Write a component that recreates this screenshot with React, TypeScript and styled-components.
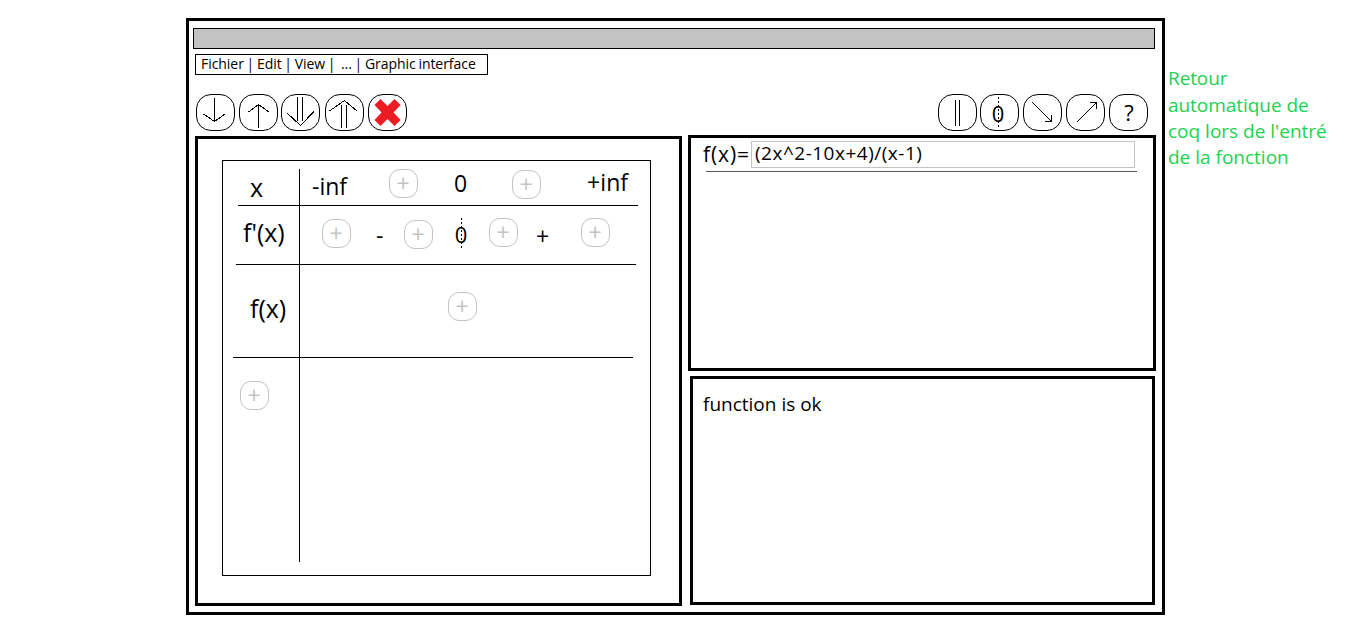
import React from "react";
import styled, { createGlobalStyle } from "styled-components";

const GlobalStyle = createGlobalStyle`
  * { box-sizing: border-box; }
  body {
    margin: 0;
    background: #fff;
    color: #000;
    font-family: "Open Sans", "Noto Sans", sans-serif;
  }
`;

const Page = styled.main`
  display: flex;
  align-items: flex-start;
  width: 1350px;
  height: 619px;
  overflow: hidden;
`;

const Window = styled.section`
  flex: none;
  width: 979px;
  height: 597px;
  margin: 18px 0 0 186px;
  border: 3px solid #000;
`;

const TitleBar = styled.div`
  width: 962px;
  height: 21px;
  margin: 7px 0 0 4px;
  border: 1px solid #000;
  background: #c3c3c3;
`;

const MenuBar = styled.nav`
  display: flex;
  width: 293px;
  height: 21px;
  margin: 5px 0 0 6px;
  padding-left: 5px;
  border: 1px solid #000;
  word-spacing: -0.85px;
`;

const Toolbar = styled.div`
  display: flex;
  justify-content: space-between;
  width: 952px;
  height: 37px;
  margin: 19px 0 0 7px;
`;

const ToolGroup = styled.div`
  display: flex;
`;

const ToolButton = styled.button<{ $gap?: number }>`
  display: flex;
  justify-content: center;
  flex: none;
  width: 39px;
  height: 37px;
  margin: 0 0 0 ${(p) => p.$gap ?? 0}px;
  padding: 0;
  border: 1px solid #000;
  border-radius: 15px;
  background: #fff;
  color: #000;
  font-family: inherit;
`;

const Icon = styled.svg`
  flex: none;
  width: 39px;
  height: 37px;
  margin-top: -1px;
  fill: none;
  stroke: #000;
  stroke-width: 1;
`;

const Columns = styled.div`
  display: flex;
  align-items: flex-start;
  gap: 6px;
  margin: 4px 0 0 6px;
`;

const SideColumn = styled.div`
  display: flex;
  flex-direction: column;
  gap: 5px;
`;

const Panel = styled.div<{ $w: number; $h: number; $top?: number; $left?: number }>`
  width: ${(p) => p.$w}px;
  height: ${(p) => p.$h}px;
  margin: ${(p) => p.$top ?? 0}px 0 0 ${(p) => p.$left ?? 0}px;
  border: 3px solid #000;
  display: flex;
  align-items: flex-start;
`;

const Sheet = styled.div`
  width: 429px;
  height: 416px;
  margin: 21px 0 0 24px;
  padding-top: 8px;
  border: 1px solid #000;
`;

const Row = styled.div<{ $h: number; $indent: number; $last?: boolean }>`
  display: flex;
  align-items: flex-start;
  width: 400px;
  height: ${(p) => p.$h}px;
  margin-left: ${(p) => p.$indent}px;
  border-bottom: ${(p) => (p.$last ? "none" : "1px solid #000")};
`;

const Head = styled.div<{ $w: number }>`
  display: flex;
  align-items: flex-start;
  flex: none;
  width: ${(p) => p.$w}px;
  height: 100%;
  border-right: 1px solid #000;
`;

const Label = styled.span<{
  $size: number;
  $top?: number;
  $left?: number;
  $w?: number;
  $track?: number;
}>`
  flex: none;
  width: ${(p) => (p.$w ? `${p.$w}px` : "auto")};
  height: 30px;
  margin: ${(p) => p.$top ?? 0}px 0 0 ${(p) => p.$left ?? 0}px;
  font-size: ${(p) => p.$size}px;
  line-height: 30px;
  letter-spacing: ${(p) => p.$track ?? 0}px;
  white-space: pre;
`;

const AddButton = styled.button<{ $top: number; $left: number }>`
  display: flex;
  align-items: center;
  justify-content: center;
  flex: none;
  width: 29px;
  height: 29px;
  margin: ${(p) => p.$top}px 0 0 ${(p) => p.$left}px;
  padding: 0 1px 0 0;
  border: 1px solid #c3c3c3;
  border-radius: 11px;
  background: #fff;
  color: #c3c3c3;
  font: 23px/27px "Open Sans", sans-serif;
`;

const Zero = styled(Label)`
  position: relative;
  text-align: center;
`;

const DashedLine = styled.i<{ $x: number; $y: number; $h: number }>`
  position: absolute;
  left: ${(p) => p.$x}px;
  top: ${(p) => p.$y}px;
  width: 1px;
  height: ${(p) => p.$h}px;
  background: repeating-linear-gradient(#000 0 2px, transparent 2px 4px);
`;

const FormulaBar = styled.div`
  display: flex;
  align-items: flex-start;
  width: 431px;
  height: 34px;
  margin-left: 15px;
  border-bottom: 1px solid #555;
`;

const Field = styled.div`
  display: flex;
  width: 384px;
  height: 27px;
  margin-top: 3px;
  border: 1px solid #c3c3c3;
`;

const Note = styled.aside`
  display: flex;
  flex-direction: column;
  margin: 65px 0 0 3px;
  color: #22d152;
`;

const NoteLine = styled.span<{ $track: number; $h?: number }>`
  height: ${(p) => p.$h ?? 26}px;
  font-size: 19px;
  line-height: 26px;
  letter-spacing: ${(p) => p.$track}px;
  white-space: nowrap;
`;

const Add = ({ top, left }: { top: number; left: number }) => (
  <AddButton $top={top} $left={left}>+</AddButton>
);

const LineIcon = ({ d }: { d: string }) => (
  <Icon viewBox="0 0 39 37" shapeRendering="crispEdges">
    <path d={d} />
  </Icon>
);

export default function App() {
  return (
    <>
      <GlobalStyle />
      <Page>
        <Window>
          <TitleBar />
          <MenuBar>
            <Label $size={14} $top={-6} $track={-0.05}>{"Fichier | Edit | View |  ... | Graphic interface"}</Label>
          </MenuBar>
          <Toolbar>
            <ToolGroup>
              <ToolButton><LineIcon d="M18.5 4V28M7.5 20L18.5 27.5L29 20" /></ToolButton>
              <ToolButton $gap={4}><LineIcon d="M19.5 10V34M9.5 18L19.5 10.5L30 18" /></ToolButton>
              <ToolButton $gap={3}><LineIcon d="M16.5 3V27M21.5 3V27M6 19L19.5 31.5L33 17.5" /></ToolButton>
              <ToolButton $gap={5}><LineIcon d="M16.5 11V34M21.5 11V34M4.5 17L19.5 6.5L32 17" /></ToolButton>
              <ToolButton $gap={4}>
                <Icon viewBox="0 0 39 37">
                  <path
                    fill="#ed1c24"
                    stroke="none"
                    d="M6.5 11L12.5 5L19.5 12L26.5 5L32.7 11L25.5 18.5L32.7 26L26.5 32L19.5 25L12.5 32L6.5 26L13.5 18.5Z"
                  />
                </Icon>
              </ToolButton>
            </ToolGroup>
            <ToolGroup>
              <ToolButton><LineIcon d="M17.5 6V32M21.5 6V32" /></ToolButton>
              <ToolButton $gap={3}>
                <Zero $size={22} $top={3} $w={14} $left={-3}>
                  0<DashedLine $x={7} $y={-1} $h={32} />
                </Zero>
              </ToolButton>
              <ToolButton $gap={4}><LineIcon d="M9 8L28.5 27.5M22 27.5H29M28.5 21V28" /></ToolButton>
              <ToolButton $gap={4}><LineIcon d="M11 28L30.5 8.5M24 8.5H31M30.5 8V15" /></ToolButton>
              <ToolButton $gap={4}><Label $size={22} $top={2} $left={1}>?</Label></ToolButton>
            </ToolGroup>
          </Toolbar>
          <Columns>
            <Panel $w={487} $h={470} $top={1}>
              <Sheet>
                <Row $h={37} $indent={15}>
                  <Head $w={62}><Label $size={25} $top={3} $left={12}>x</Label></Head>
                  <Label $size={23} $top={2} $left={12} $w={39}>-inf</Label>
                  <Add top={0} left={38} />
                  <Label $size={23} $top={-1} $left={36} $w={13}>0</Label>
                  <Add top={1} left={45} />
                  <Label $size={23} $top={-2} $left={46} $track={0.1}>+inf</Label>
                </Row>
                <Row $h={59} $indent={13}>
                  <Head $w={64}><Label $size={25} $top={11} $left={7}>f'(x)</Label></Head>
                  <Add top={13} left={22} />
                  <Label $size={23} $top={14} $left={25} $w={7}>-</Label>
                  <Add top={14} left={21} />
                  <Zero $size={22} $top={13} $left={21} $w={14}>
                    0<DashedLine $x={7} $y={-1} $h={32} />
                  </Zero>
                  <Add top={12} left={21} />
                  <Label $size={23} $top={15} $left={18} $w={14}>+</Label>
                  <Add top={12} left={31} />
                </Row>
                <Row $h={93} $indent={10}>
                  <Head $w={67}><Label $size={25} $top={28} $left={17}>f(x)</Label></Head>
                  <Add top={27} left={148} />
                </Row>
                <Row $h={204} $indent={10} $last>
                  <Head $w={67}><Add top={23} left={7} /></Head>
                </Row>
              </Sheet>
            </Panel>
            <SideColumn>
              <Panel $w={468} $h={236}>
                <FormulaBar>
                  <Label $size={21} $top={1} $left={-3} $w={48} $track={0.9}>f(x)=</Label>
                  <Field>
                    <Label $size={19} $top={-4} $left={3} $track={0.5}>(2x^2-10x+4)/(x-1)</Label>
                  </Field>
                </FormulaBar>
              </Panel>
              <Panel $w={465} $h={229} $left={2}>
                <Label $size={19} $top={10} $left={10} $track={0}>function is ok</Label>
              </Panel>
            </SideColumn>
          </Columns>
        </Window>
        <Note>
          <NoteLine $track={-0.1} $h={27}>Retour</NoteLine>
          <NoteLine $track={-0.05}>automatique de</NoteLine>
          <NoteLine $track={0}>coq lors de l'entré</NoteLine>
          <NoteLine $track={0}>de la fonction</NoteLine>
        </Note>
      </Page>
    </>
  );
}
